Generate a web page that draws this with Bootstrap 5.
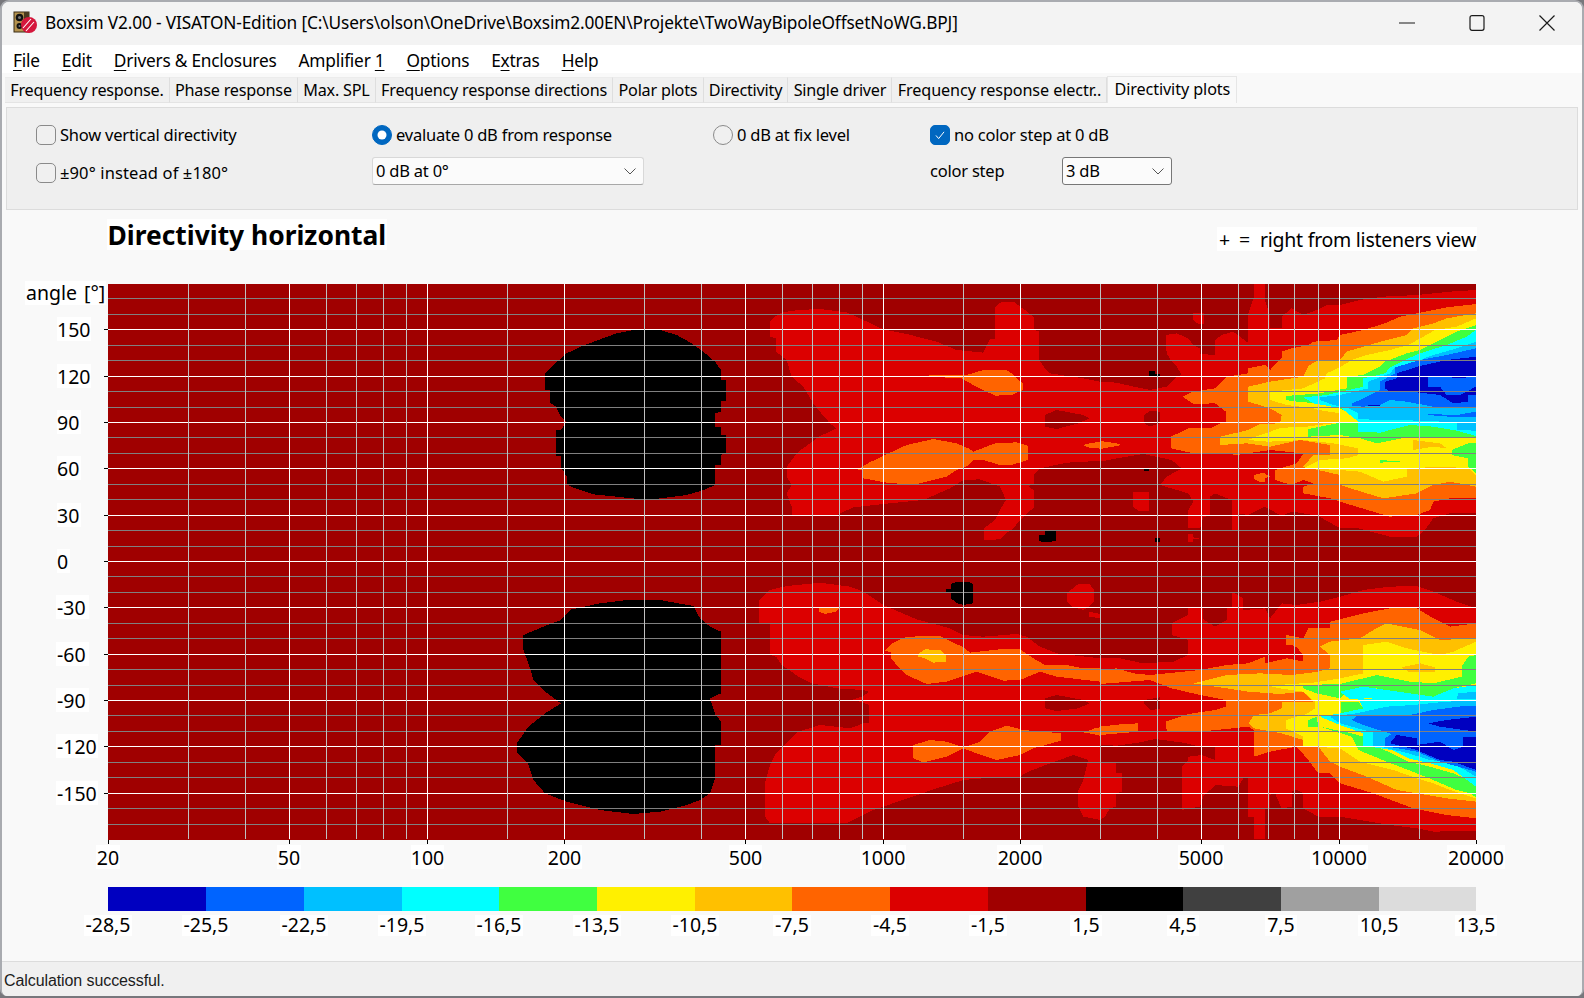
<!DOCTYPE html>
<html lang="en">
<head>
<meta charset="utf-8">
<title>Boxsim V2.00</title>
<link rel="stylesheet" href="https://cdn.jsdelivr.net/npm/bootstrap@5.3.0/dist/css/bootstrap.min.css">
<style>
html,body{height:100%;margin:0;overflow:hidden}
body{background:#77777c;font-family:"Noto Sans","Liberation Sans",sans-serif;color:#000;font-size:17px}
.app-win{width:1584px;height:996px;border:2px solid #a9abb0;border-bottom:0;border-radius:9px 9px 7px 7px;overflow:hidden;background:#f9f9f9}
.app-title{height:43px;background:#f3f3f3;padding:0 0 2px 11px;font-size:17.3px;letter-spacing:-.15px}
.app-title .tt-text{margin-left:7px;white-space:nowrap}
.win-btn{width:70px;height:41px}
.app-menu{height:28px;background:#fff;padding:4px 0 0 11px;font-size:17.3px;letter-spacing:-.22px}
.app-menu span{margin-right:22px;white-space:nowrap}
.app-menu u{text-underline-offset:3px}
.app-tabs{height:34px;padding:3px 0 4px 3px;border:0;flex-wrap:nowrap;background:#f9f9f9;font-size:16.2px;letter-spacing:-.22px}
.app-tabs .nav-item{display:flex}
.app-tabs .nav-link{margin:1px 0 0;padding:1px 5.25px 0;color:#000;background:#f0f0f0;border:0;border-right:1px solid #dedede;border-bottom:1px solid #e4e4e4;border-top:1px solid #ececec;border-radius:0;white-space:nowrap;display:flex;align-items:center}
.app-tabs .nav-link.tab-long{letter-spacing:-.1px}
.app-tabs .nav-link.active{margin-top:0;padding:0 6px 2px;background:#f9f9f9;color:#000;border:1px solid #e6e6e6;border-bottom:0;letter-spacing:-.1px}
.app-panel{height:103px;margin:0 4px;padding:13px 0 0 29px;background:#efefef;border:1px solid #dcdcdc;display:grid;grid-template-columns:336px 341px 217px 1fr;grid-template-rows:28px 28px;row-gap:8px;font-size:16.5px;letter-spacing:-.22px}
.app-panel .form-check-input{width:20px;height:20px;margin:0 4px 0 0;flex:none;background-color:#f0f0f0;border:1px solid #8a8a8a;float:none}
.app-panel .form-check-input[type=checkbox]{border-radius:5px}
.app-panel .form-check-input:checked{background-color:#0067c0;border-color:#0067c0}
.app-panel .form-check-input[type=checkbox]:checked{background-image:url("data:image/svg+xml,%3csvg xmlns='http://www.w3.org/2000/svg' viewBox='0 0 20 20'%3e%3cpath fill='none' stroke='%23fff' stroke-width='1.1' d='M5.5 10.5l3 3.5 6-7.5'/%3e%3c/svg%3e")}
.app-panel .form-check-label{white-space:nowrap}
.app-panel .lbl-wide{letter-spacing:.12px}
.app-select{height:28px;padding:1px 0 1px 3px;background-color:#fbfbfb;border:1px solid #d8d8d8;border-bottom-color:#a8a8a8;border-radius:3px;font-size:16.5px;letter-spacing:-.22px;color:#000;background-size:14px 14px;background-position:right 6px center;background-image:url("data:image/svg+xml,%3csvg xmlns='http://www.w3.org/2000/svg' viewBox='0 0 14 14'%3e%3cpath fill='none' stroke='%23555' stroke-width='1' d='M1.5 4.5L7 10l5.500-5.500'/%3e%3c/svg%3e")}
.sel-wide{width:272px}
.sel-step{width:110px;border-color:#777}
.lbl-step{width:132px;flex:none}
.app-chart{display:block;flex:none}
.app-status{height:35px;background:#f0f0f0;border-top:1px solid #dcdcdc;padding:7px 0 0 2px;font-family:"Liberation Sans",sans-serif;font-size:16px;letter-spacing:-.09px;color:#1c1c1c}
.chart-lbl{font-family:"Noto Sans",sans-serif;font-size:19.5px;fill:#000}
.lbl-note{letter-spacing:-.26px}
.chart-ttl{font-family:"Noto Sans",sans-serif;font-size:26.4px;font-weight:700;fill:#000}
.lbl-mid{text-anchor:middle}
.chip{fill:#fff}
.ht-r{fill:#dc0000}.ht-o{fill:#ff6400}.ht-a{fill:#ffc000}.ht-y{fill:#fff000}.ht-g{fill:#40ff40}.ht-c{fill:#00ffff}.ht-s{fill:#00c0ff}.ht-b{fill:#0064ff}.ht-n{fill:#0000c0}.ht-k{fill:#000}.ht-d{fill:#a00000}
.ht-4{fill:#404040}.ht-9{fill:#a0a0a0}.ht-l{fill:#dcdcdc}
.plot-art{shape-rendering:crispEdges}
.gl-w,.gl-g,.gl-l,.gl-t{fill:none;stroke-width:1}
.gl-w{stroke:#fff}.gl-g{stroke:#808080}.gl-l{stroke:#c0c0c0}.gl-t{stroke:#000}
.glyph-s{fill:none;stroke:#1a1a1a;stroke-width:1.2}
</style>
</head>
<body>
<div class="app-win d-flex flex-column">
  <div class="app-title d-flex align-items-center">
    <svg width="25" height="24" viewBox="0 0 25 24" aria-hidden="true">
      <rect x="1" y="1" width="15" height="20" fill="#b4924e" stroke="#3a2d14"/>
      <rect x="11" y="1" width="5" height="20" fill="#4a3a20"/>
      <circle cx="6.500" cy="6.500" r="3.800" fill="#111"/><circle cx="6.500" cy="6.500" r="1.500" fill="#777"/>
      <circle cx="6.500" cy="15" r="3" fill="#111"/><circle cx="6.500" cy="15" r="1" fill="#777"/>
      <circle cx="16" cy="14" r="8" fill="#d5173c"/>
      <path d="M10 17l8-9M13 20l8-9" stroke="#fff" stroke-width="1.100" fill="none"/>
    </svg>
    <span class="tt-text flex-grow-1">Boxsim V2.00 - VISATON-Edition [C:\Users\olson\OneDrive\Boxsim2.00EN\Projekte\TwoWayBipoleOffsetNoWG.BPJ]</span>
    <div class="win-btn d-flex align-items-center justify-content-center"><svg width="16" height="16" viewBox="0 0 16 16"><path class="glyph-s" d="M0 8h16"/></svg></div>
    <div class="win-btn d-flex align-items-center justify-content-center"><svg width="16" height="16" viewBox="0 0 16 16"><rect class="glyph-s" x="1" y=".7" width="14" height="14.600" rx="2"/></svg></div>
    <div class="win-btn d-flex align-items-center justify-content-center"><svg width="16" height="16" viewBox="0 0 16 16"><path class="glyph-s" d="M.5.5l15 15M15.500.5l-15 15"/></svg></div>
  </div>
  <div class="app-menu d-flex align-items-center">
    <span><u>F</u>ile</span><span><u>E</u>dit</span><span><u>D</u>rivers &amp; Enclosures</span><span>Amplifier <u>1</u></span><span><u>O</u>ptions</span><span>E<u>x</u>tras</span><span><u>H</u>elp</span>
  </div>
  <ul class="nav nav-tabs app-tabs">
    <li class="nav-item"><a class="nav-link">Frequency response.</a></li>
    <li class="nav-item"><a class="nav-link">Phase response</a></li>
    <li class="nav-item"><a class="nav-link">Max. SPL</a></li>
    <li class="nav-item"><a class="nav-link">Frequency response directions</a></li>
    <li class="nav-item"><a class="nav-link">Polar plots</a></li>
    <li class="nav-item"><a class="nav-link">Directivity</a></li>
    <li class="nav-item"><a class="nav-link">Single driver</a></li>
    <li class="nav-item"><a class="nav-link tab-long">Frequency response electr..</a></li>
    <li class="nav-item"><a class="nav-link active">Directivity plots</a></li>
  </ul>
  <form class="app-panel">
    <div class="d-flex align-items-center"><input class="form-check-input" type="checkbox" id="c1"><label class="form-check-label" for="c1">Show vertical directivity</label></div>
    <div class="d-flex align-items-center"><input class="form-check-input" type="radio" name="r" id="r1" checked><label class="form-check-label" for="r1">evaluate 0 dB from response</label></div>
    <div class="d-flex align-items-center"><input class="form-check-input" type="radio" name="r" id="r2"><label class="form-check-label" for="r2">0 dB at fix level</label></div>
    <div class="d-flex align-items-center"><input class="form-check-input" type="checkbox" id="c3" checked><label class="form-check-label" for="c3">no color step at 0 dB</label></div>
    <div class="d-flex align-items-center pt-1"><input class="form-check-input" type="checkbox" id="c2"><label class="form-check-label lbl-wide" for="c2">±90° instead of ±180°</label></div>
    <div><select class="form-select app-select sel-wide"><option>0 dB at 0°</option></select></div>
    <div></div>
    <div class="d-flex align-items-center"><span class="lbl-step">color step</span><select class="form-select app-select sel-step"><option>3 dB</option></select></div>
  </form>

  <svg class="app-chart" width="1580" height="751" viewBox="2 210 1580 751" role="img" aria-label="Directivity horizontal heat map">
    <!-- captions -->
    <rect class="chip" x="107" y="219" width="280" height="31"/>
    <text class="chart-ttl" x="107.500" y="245">Directivity horizontal</text>
    <rect class="chip" x="1217" y="227" width="260" height="24"/>
    <text class="chart-lbl" x="1219" y="247">+</text>
    <text class="chart-lbl" x="1239" y="247">=</text>
    <text class="chart-lbl lbl-note" x="1260" y="247">right from listeners view</text>
    <rect class="chip" x="25" y="281" width="81" height="24"/>
    <text class="chart-lbl" x="26" y="300" word-spacing="2">angle [°]</text>

    <!-- heat map -->
    <g class="plot-art">
      <rect class="ht-d" x="108" y="284" width="1368" height="556"/>

      <!-- black lobes -->
      <svg x="500" y="310" width="260" height="200" viewBox="0 0 780 600">
        <polygon class="ht-k" points="400,60 480,60 530,75 575,100 610,125 645,155 663,180 663,210 678,210 678,272 663,272 663,305 645,310 645,350 663,350 663,375 678,375 678,430 663,435 663,465 645,465 645,525 612,540 560,555 465,567 415,567 350,560 280,553 220,533 200,523 200,500 183,472 183,438 168,438 168,360 183,360 200,335 183,320 168,290 150,278 150,240 135,240 135,192 150,175 183,145 200,130 250,107 300,88 350,70"/>
      </svg>
      <svg x="500" y="590" width="260" height="240" viewBox="0 0 780 720">
        <polygon class="ht-k" points="380,30 480,30 580,48 600,85 630,110 663,125 663,310 630,325 645,372 663,395 663,465 645,465 645,565 630,610 600,630 560,645 480,665 400,672 300,660 200,635 135,610 100,570 85,522 52,490 52,458 85,410 135,370 183,340 135,305 100,268 85,220 70,180 70,135 135,108 183,90 215,58 300,40"/>
      </svg>

      <!-- upper middle -->
      <svg x="750" y="280" width="350" height="280" viewBox="0 0 1050 840">
        <polygon class="ht-r" points="60,125 78,108 97,97 145,90 210,87 290,97 340,120 400,148 470,162 560,185 620,210 700,218 720,178 735,178 735,82 755,65 790,65 832,95 852,112 852,150 867,155 867,240 885,265 900,280 1000,295 1050,305 1130,312 1200,328 1200,525 1100,540 950,548 870,565 852,585 852,612 835,618 852,632 852,682 815,715 785,750 768,760 750,778 702,780 702,745 735,720 750,690 768,660 750,620 690,598 640,600 600,625 520,660 400,672 310,682 260,705 125,705 125,680 110,640 125,615 110,590 110,560 125,540 145,515 180,490 205,470 240,455 258,445 240,430 205,390 190,370 160,320 125,290 110,240 78,215 78,175 60,170"/>
        <polygon class="ht-d" points="885,405 920,390 1000,405 1018,415 985,430 920,447 885,440"/>
        <polygon class="ht-o" points="537,285 650,285 700,270 770,270 785,280 800,295 818,310 818,330 785,345 735,347 700,330 670,315 635,295 537,290"/>
        <polygon class="ht-o" points="323,568 357,548 405,525 470,495 550,477 620,490 655,505 670,515 735,490 800,487 833,497 833,518 852,518 833,522 833,540 785,555 750,555 700,540 670,540 655,557 620,570 590,590 500,612 420,610 340,595 338,572"/>
        <polygon class="ht-o" points="998,495 1018,490 1065,483 1098,490 1115,493 1098,500 1065,507 1018,503"/>
        <polygon class="ht-k" points="868,765 885,765 885,753 918,753 918,783 885,787 868,783"/>
      </svg>

      <!-- lower middle -->
      <svg x="750" y="560" width="350" height="280" viewBox="0 0 1050 840">
        <polygon class="ht-r" points="27,120 60,90 110,78 210,68 300,80 340,95 400,135 500,178 600,205 640,225 700,230 800,222 830,230 870,260 920,280 1050,295 1200,310 1200,550 1100,555 1065,565 1065,600 1100,610 1100,635 1115,635 1115,695 1085,710 1085,765 1050,780 1000,770 985,740 985,690 1000,660 1015,600 970,585 900,610 835,635 800,655 700,655 640,660 560,685 400,740 370,750 340,765 290,790 60,790 45,770 45,670 60,615 78,580 125,535 145,515 210,495 300,505 340,490 357,490 357,435 330,425 305,420 340,408 357,395 340,390 260,385 185,370 145,350 125,335 95,315 78,290 60,285 60,190 27,190"/>
        <polygon class="ht-d" points="885,415 920,405 1000,420 1018,430 985,445 920,453 885,445"/>
        <polygon class="ht-o" points="405,272 425,250 470,230 570,228 640,262 660,278 750,268 810,268 850,295 885,315 950,315 1000,325 1070,325 1140,340 1200,345 1200,365 1120,370 1050,365 920,350 870,335 810,360 760,362 680,335 635,350 590,365 530,372 470,345 440,315 423,295 423,278"/>
        <polygon class="ht-o" points="207,142 270,143 258,155 225,162 207,155"/>
        <polygon class="ht-o" points="490,555 540,540 590,545 640,562 690,545 720,515 770,497 820,510 900,517 933,520 933,542 850,565 810,585 740,600 680,580 640,565 590,590 520,607 490,595"/>
        <polygon class="ht-o" points="1000,517 1035,505 1100,492 1165,490 1165,515 1100,517 1050,527 1018,520"/>
        <polygon class="ht-a" points="505,282 525,268 570,270 588,285 588,305 550,308 525,295 505,290"/>
        <polygon class="ht-k" points="588,88 603,88 603,72 622,65 655,65 670,72 670,130 640,135 622,130 603,115 603,100 588,100"/>
        <polygon class="ht-r" points="950,100 985,72 1018,72 1033,90 1033,125 1018,140 1000,150 965,140 950,125"/>
        <polygon class="ht-r" points="1018,155 1050,162 1050,175 1018,170"/>
      </svg>

      <!-- upper right -->
      <svg x="1100" y="280" width="376" height="280" viewBox="0 0 1128 840">
        <polygon class="ht-r" points="0,305 50,308 100,320 150,330 200,320 230,290 245,285 230,260 212,240 200,220 197,165 230,160 265,175 280,195 300,205 300,222 345,225 345,180 365,165 400,155 420,170 444,188 444,105 462,50 462,12 495,12 495,60 510,110 510,145 545,145 545,110 575,85 610,105 650,90 680,75 720,75 780,60 850,50 950,45 1050,35 1128,30 1128,700 1050,700 1000,715 975,750 950,770 870,770 775,745 720,745 655,708 610,700 575,695 545,708 495,680 445,705 415,700 415,750 395,750 395,660 345,640 330,650 330,705 310,712 300,745 265,745 265,690 280,665 265,640 180,615 200,590 245,565 215,540 130,522 50,535 0,545"/>
        <polygon class="ht-r" points="100,637 147,637 147,693 115,693 100,680"/>
        <polygon class="ht-r" points="265,762 280,762 280,772 300,775 280,778 280,785 265,785"/>
        <polygon class="ht-r" points="280,100 312,100 312,132 295,132 280,120"/>
        <polygon class="ht-d" points="133,405 150,393 180,395 180,430 150,440 133,430"/>
        <polygon class="ht-d" points="410,402 445,402 445,410 410,410"/>
        <polygon class="ht-k" points="147,273 165,273 165,282 180,282 180,288 147,288"/>
        <polygon class="ht-k" points="132,565 147,565 147,573 132,573"/>
        <polygon class="ht-k" points="165,773 180,773 180,786 165,786"/>
        <polygon class="ht-o" points="0,483 50,490 66,495 50,498 0,507"/>
        <polygon class="ht-o" points="462,585 490,578 510,590 495,595 495,605 478,605 462,597"/>
        <polygon class="ht-o" points="247,350 280,335 345,325 380,290 445,280 445,265 495,255 510,270 545,235 545,215 575,205 625,195 640,185 710,180 720,165 790,150 855,130 900,110 950,100 1040,82 1128,72 1128,655 1050,655 1000,665 990,690 950,705 870,710 820,695 770,680 720,665 690,655 610,640 610,620 640,610 610,600 575,615 525,600 525,570 590,550 610,520 510,510 410,525 360,518 280,520 213,505 213,470 265,445 330,445 360,430 378,425 378,395 345,370 280,372"/>
        <polygon class="ht-a" points="445,320 510,305 610,290 625,258 655,240 720,240 740,215 790,200 860,180 920,165 940,145 1000,130 1040,115 1128,100 1128,620 1050,605 1000,615 950,640 850,655 800,640 720,615 720,585 655,570 610,560 640,525 690,525 690,495 600,480 510,500 440,490 360,495 360,470 445,450 480,432 540,430 545,405 510,385 445,365"/>
        <polygon class="ht-y" points="510,335 610,325 675,295 680,280 720,262 755,240 800,225 870,210 925,195 970,170 1005,150 1070,140 1128,115 1128,585 1105,565 1030,560 920,565 920,590 850,605 780,575 720,570 610,565 660,540 740,535 775,525 775,505 700,490 610,480 505,485 445,480 480,465 540,445 590,440 620,440 655,435 720,428 720,400 655,390 640,385 560,375 510,360"/>
        <polygon class="ht-a" points="940,480 1020,490 1040,505 1000,500 940,510"/>
        <polygon class="ht-g" points="558,348 660,340 740,325 740,290 790,285 840,260 855,245 920,220 960,210 1020,180 1070,155 1128,135 1128,580 1105,560 1105,535 1055,525 1055,510 1105,490 1128,490 1128,470 1060,470 1000,470 930,470 830,490 780,475 720,465 625,470 625,447 660,440 710,430 775,428 775,400 740,395 720,385 650,370 590,365 558,360"/>
        <polygon class="ht-g" points="840,540 905,545 840,548"/>
        <polygon class="ht-c" points="610,352 680,345 790,320 790,295 855,280 870,262 925,235 960,220 1040,195 1100,170 1128,150 1128,468 1070,452 1000,440 930,435 840,458 775,455 775,425 725,385 640,370"/>
        <polygon class="ht-s" points="660,352 720,345 805,325 805,305 870,280 885,262 950,245 990,228 1070,205 1128,185 1128,452 1070,450 1070,430 1030,425 900,420 775,418 775,400 745,385 700,375 660,360"/>
        <polygon class="ht-b" points="755,370 780,360 840,330 840,305 885,280 885,262 960,240 1040,225 1128,205 1128,385 1040,380 1000,380 920,365 870,360 840,375 790,380 755,378"/>
        <polygon class="ht-b" points="985,402 1070,405 1128,395 1128,412 1070,412 985,405"/>
        <polygon class="ht-n" points="855,305 890,295 890,280 960,258 1040,240 1128,230 1128,290 1070,295 1040,290 985,290 985,320 1020,320 1040,345 1080,345 1128,320 1128,345 1105,345 1105,365 1060,370 1020,345 930,335 870,335 855,325"/>
        <polygon class="ht-n" points="805,375 840,375 840,379 805,379"/>
      </svg>

      <!-- lower right -->
      <svg x="1100" y="560" width="376" height="280" viewBox="0 0 1128 840">
        <polygon class="ht-r" points="0,295 60,295 130,310 220,305 265,285 265,240 215,225 215,190 265,165 265,145 310,145 310,178 345,200 380,180 380,145 395,145 395,95 430,115 430,150 495,145 510,175 545,130 590,135 660,125 720,110 790,90 870,80 950,78 1000,95 1070,125 1128,145 1128,812 1000,815 950,805 870,795 720,770 655,770 610,745 610,700 590,690 575,695 575,740 545,745 525,700 510,705 510,745 495,745 495,838 462,838 462,770 445,770 445,655 430,655 415,680 345,675 330,690 310,710 300,740 245,750 245,620 265,600 265,590 305,585 345,600 345,560 300,560 250,548 165,537 115,548 50,557 0,555"/>
        <polygon class="ht-r" points="0,610 48,610 48,640 65,640 65,695 48,700 48,740 30,745 15,770 0,780"/>
        <polygon class="ht-d" points="132,420 180,412 180,447 150,450 132,430"/>
        <polygon class="ht-o" points="0,330 50,325 100,340 150,345 200,340 300,330 380,315 445,310 495,290 495,310 560,295 610,305 610,285 590,262 575,255 558,255 558,225 610,235 625,205 690,205 690,185 790,160 870,145 950,145 1000,175 1050,200 1128,190 1128,775 1040,765 940,745 820,700 720,670 690,640 655,640 625,600 590,560 510,575 462,590 462,510 445,500 300,515 200,515 198,485 265,462 345,450 378,440 378,420 300,405 215,385 150,360 50,368 0,372"/>
        <polygon class="ht-o" points="0,500 60,493 115,490 115,515 0,525"/>
        <polygon class="ht-a" points="280,370 380,345 480,340 575,345 655,335 690,325 690,285 660,260 690,245 780,235 820,210 860,190 960,210 1020,240 1128,235 1128,725 1040,715 950,700 890,690 800,650 720,620 690,605 655,560 610,540 545,520 462,505 445,490 462,465 510,460 545,445 545,425 640,425 610,395 540,402 445,395 380,385"/>
        <polygon class="ht-y" points="510,378 570,372 640,368 720,355 790,340 790,255 860,245 920,265 1020,285 1060,275 1128,245 1128,715 1050,690 1000,670 950,655 880,630 780,605 720,565 610,558 610,530 558,505 558,480 590,470 620,462 645,445 645,425 610,395 540,385"/>
        <polygon class="ht-a" points="905,322 960,310 1005,322 1005,335 925,335"/>
        <polygon class="ht-g" points="610,375 720,372 790,355 830,345 930,365 1000,370 1085,350 1085,320 1105,290 1128,285 1128,370 1060,385 1000,410 900,410 830,385 750,390 720,415 650,400 610,385"/>
        <polygon class="ht-g" points="722,425 775,425 790,445 722,460"/>
        <polygon class="ht-g" points="625,480 650,470 655,500 625,500"/>
        <polygon class="ht-g" points="660,500 755,520 790,530 790,557 830,560 875,580 925,605 990,620 1060,640 1128,670 1128,712 1110,700 1070,690 1000,660 925,630 860,605 775,570 755,530"/>
        <polygon class="ht-c" points="720,395 790,380 1000,410 1060,385 1128,375 1128,395 1075,400 1070,418 900,418 800,415 750,418"/>
        <polygon class="ht-c" points="660,470 720,460 790,445 775,418 1128,418 1128,680 1060,630 990,610 925,595 875,570 810,560 790,557 790,520 720,495"/>
        <polygon class="ht-s" points="690,470 770,460 860,440 940,435 1040,425 1128,422 1128,650 1060,610 990,600 925,580 840,560 820,557 820,518 720,490"/>
        <polygon class="ht-s" points="1075,400 1128,395 1128,418 1070,418"/>
        <polygon class="ht-b" points="755,480 770,468 860,465 930,465 1000,450 1100,437 1128,437 1128,635 1075,620 1020,605 950,575 855,558 855,535 875,522 790,495"/>
        <polygon class="ht-n" points="870,550 890,525 950,535 950,555 1020,545 1060,570 1090,560 1090,530 1128,530 1128,630 1060,605 1020,600 950,570"/>
        <polygon class="ht-n" points="985,490 1040,480 1128,470 1128,515 1020,500"/>
      </svg>

      <!-- grid -->
      <path class="gl-g" d="M108 298.500H1476M108 314.500H1476M108 345.500H1476M108 360.500H1476M108 391.500H1476M108 407.500H1476M108 437.500H1476M108 453.500H1476M108 484.500H1476M108 499.500H1476M108 530.500H1476M108 546.500H1476M108 576.500H1476M108 592.500H1476M108 623.500H1476M108 638.500H1476M108 669.500H1476M108 685.500H1476M108 715.500H1476M108 731.500H1476M108 762.500H1476M108 777.500H1476M108 808.500H1476M108 824.500H1476"/>
      <path class="gl-w" d="M108 329.500H1476M108 376.500H1476M108 422.500H1476M108 468.500H1476M108 515.500H1476M108 561.500H1476M108 607.500H1476M108 654.500H1476M108 700.500H1476M108 746.500H1476M108 793.500H1476"/>
      <path class="gl-l" d="M188.500 284V839M245.500 284V839M326.500 284V839M356.500 284V839M383.500 284V839M406.500 284V839M507.500 284V839M644.500 284V839M701.500 284V839M782.500 284V839M812.500 284V839M839.500 284V839M862.500 284V839M963.500 284V839M1100.500 284V839M1157.500 284V839M1238.500 284V839M1268.500 284V839M1294.500 284V839M1318.500 284V839M1419.500 284V839"/>
      <path class="gl-w" d="M289.500 284V839M427.500 284V839M564.500 284V839M745.500 284V839M883.500 284V839M1020.500 284V839M1201.500 284V839M1339.500 284V839"/>
      <!-- ticks -->
      <path class="gl-t" d="M104 329.500h4M104 376.500h4M104 422.500h4M104 468.500h4M104 515.500h4M104 561.500h4M104 607.500h4M104 654.500h4M104 700.500h4M104 746.500h4M104 793.500h4M108.500 840v4M289.500 840v4M427.500 840v4M564.500 840v4M745.500 840v4M883.500 840v4M1020.500 840v4M1201.500 840v4M1339.500 840v4M1476.500 840v4"/>
    </g>

    <!-- angle axis -->
    <g>
      <rect class="chip" x="57" y="317" width="34" height="24"/><text class="chart-lbl" x="57" y="337">150</text>
      <rect class="chip" x="57" y="364" width="34" height="24"/><text class="chart-lbl" x="57" y="384">120</text>
      <rect class="chip" x="57" y="410" width="24" height="24"/><text class="chart-lbl" x="57" y="430">90</text>
      <rect class="chip" x="57" y="456" width="24" height="24"/><text class="chart-lbl" x="57" y="476">60</text>
      <rect class="chip" x="57" y="503" width="24" height="24"/><text class="chart-lbl" x="57" y="523">30</text>
      <rect class="chip" x="57" y="549" width="13" height="24"/><text class="chart-lbl" x="57" y="569">0</text>
      <rect class="chip" x="56" y="595" width="33" height="24"/><text class="chart-lbl" x="57" y="615">-30</text>
      <rect class="chip" x="56" y="642" width="33" height="24"/><text class="chart-lbl" x="57" y="662">-60</text>
      <rect class="chip" x="56" y="688" width="33" height="24"/><text class="chart-lbl" x="57" y="708">-90</text>
      <rect class="chip" x="56" y="734" width="42" height="24"/><text class="chart-lbl" x="57" y="754">-120</text>
      <rect class="chip" x="56" y="781" width="42" height="24"/><text class="chart-lbl" x="57" y="801">-150</text>
    </g>
    <!-- frequency axis -->
    <g>
      <rect class="chip" x="96" y="845" width="24" height="24"/><text class="chart-lbl lbl-mid" x="108" y="865">20</text>
      <rect class="chip" x="277" y="845" width="24" height="24"/><text class="chart-lbl lbl-mid" x="289" y="865">50</text>
      <rect class="chip" x="411" y="845" width="33" height="24"/><text class="chart-lbl lbl-mid" x="427.500" y="865">100</text>
      <rect class="chip" x="547" y="845" width="35" height="24"/><text class="chart-lbl lbl-mid" x="564.500" y="865">200</text>
      <rect class="chip" x="729" y="845" width="33" height="24"/><text class="chart-lbl lbl-mid" x="745.500" y="865">500</text>
      <rect class="chip" x="860" y="845" width="46" height="24"/><text class="chart-lbl lbl-mid" x="883" y="865">1000</text>
      <rect class="chip" x="997" y="845" width="46" height="24"/><text class="chart-lbl lbl-mid" x="1020" y="865">2000</text>
      <rect class="chip" x="1178" y="845" width="46" height="24"/><text class="chart-lbl lbl-mid" x="1201" y="865">5000</text>
      <rect class="chip" x="1310" y="845" width="58" height="24"/><text class="chart-lbl lbl-mid" x="1339" y="865">10000</text>
      <rect class="chip" x="1447" y="845" width="58" height="24"/><text class="chart-lbl lbl-mid" x="1476" y="865">20000</text>
    </g>
    <!-- colour legend -->
    <g class="plot-art">
      <rect class="ht-n" x="108" y="887" width="98" height="24"/>
      <rect class="ht-b" x="206" y="887" width="98" height="24"/>
      <rect class="ht-s" x="304" y="887" width="98" height="24"/>
      <rect class="ht-c" x="402" y="887" width="97" height="24"/>
      <rect class="ht-g" x="499" y="887" width="98" height="24"/>
      <rect class="ht-y" x="597" y="887" width="98" height="24"/>
      <rect class="ht-a" x="695" y="887" width="97" height="24"/>
      <rect class="ht-o" x="792" y="887" width="98" height="24"/>
      <rect class="ht-r" x="890" y="887" width="98" height="24"/>
      <rect class="ht-d" x="988" y="887" width="98" height="24"/>
      <rect class="ht-k" x="1086" y="887" width="97" height="24"/>
      <rect class="ht-4" x="1183" y="887" width="98" height="24"/>
      <rect class="ht-9" x="1281" y="887" width="98" height="24"/>
      <rect class="ht-l" x="1379" y="887" width="97" height="24"/>
    </g>
    <g>
      <rect class="chip" x="84" y="915" width="48" height="21"/><text class="chart-lbl lbl-mid" x="108" y="932">-28,5</text>
      <rect class="chip" x="182" y="915" width="48" height="21"/><text class="chart-lbl lbl-mid" x="206" y="932">-25,5</text>
      <rect class="chip" x="280" y="915" width="48" height="21"/><text class="chart-lbl lbl-mid" x="304" y="932">-22,5</text>
      <rect class="chip" x="378" y="915" width="48" height="21"/><text class="chart-lbl lbl-mid" x="402" y="932">-19,5</text>
      <rect class="chip" x="475" y="915" width="48" height="21"/><text class="chart-lbl lbl-mid" x="499" y="932">-16,5</text>
      <rect class="chip" x="573" y="915" width="48" height="21"/><text class="chart-lbl lbl-mid" x="597" y="932">-13,5</text>
      <rect class="chip" x="671" y="915" width="48" height="21"/><text class="chart-lbl lbl-mid" x="695" y="932">-10,5</text>
      <rect class="chip" x="773" y="915" width="38" height="21"/><text class="chart-lbl lbl-mid" x="792" y="932">-7,5</text>
      <rect class="chip" x="871" y="915" width="38" height="21"/><text class="chart-lbl lbl-mid" x="890" y="932">-4,5</text>
      <rect class="chip" x="969" y="915" width="38" height="21"/><text class="chart-lbl lbl-mid" x="988" y="932">-1,5</text>
      <rect class="chip" x="1070" y="915" width="32" height="21"/><text class="chart-lbl lbl-mid" x="1086" y="932">1,5</text>
      <rect class="chip" x="1167" y="915" width="32" height="21"/><text class="chart-lbl lbl-mid" x="1183" y="932">4,5</text>
      <rect class="chip" x="1265" y="915" width="32" height="21"/><text class="chart-lbl lbl-mid" x="1281" y="932">7,5</text>
      <rect class="chip" x="1358" y="915" width="42" height="21"/><text class="chart-lbl lbl-mid" x="1379" y="932">10,5</text>
      <rect class="chip" x="1455" y="915" width="42" height="21"/><text class="chart-lbl lbl-mid" x="1476" y="932">13,5</text>
    </g>
  </svg>
  <div class="app-status flex-grow-1">Calculation successful.</div>
</div>
<script src="https://cdn.jsdelivr.net/npm/bootstrap@5.3.0/dist/js/bootstrap.bundle.min.js"></script>
</body>
</html>
